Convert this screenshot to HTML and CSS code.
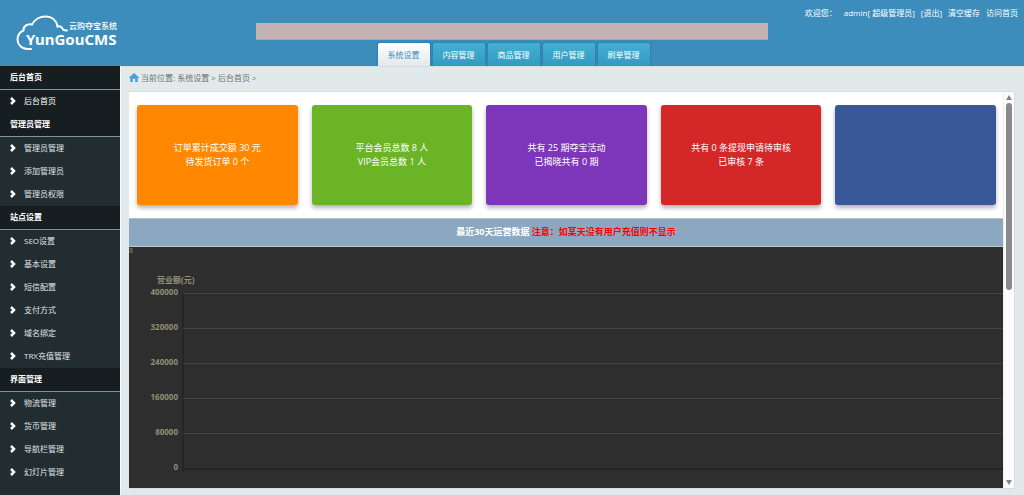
FILE: index.html
```html
<!DOCTYPE html>
<html lang="zh-CN">
<head>
<meta charset="utf-8">
<title>后台首页</title>
<link rel="stylesheet" href="styles.css">
</head>
<body>
<header class="header">
  <a class="logo" href="#">
    <svg class="logo-art" viewBox="0 0 120 66" role="img" aria-label="云购夺宝系统 YunGouCMS">
      <path class="logo-cloud" d="M31 49H27.500C21 49 17.500 44 17.500 39.500C17.500 35 20 32 23.500 30.500C23 26.500 27 23.500 32 24.500C34.500 19.500 40 16.500 45.500 16.500C52 16.500 56.500 20.500 57.500 26.500C60 25.500 62.500 27.500 63 29.500Q64 30.500 67 30.500"/>
      <text class="logo-cn" x="69" y="29">云购夺宝系统</text>
      <text class="logo-en" x="26" y="45">YunGouCMS</text>
    </svg>
  </a>
  <div class="middle">
    <div class="banner"></div>
    <nav class="tabs">
      <a class="tab tab-active" href="#">系统设置</a>
      <a class="tab" href="#">内容管理</a>
      <a class="tab" href="#">商品管理</a>
      <a class="tab" href="#">用户管理</a>
      <a class="tab" href="#">刷单管理</a>
    </nav>
  </div>
  <div class="user">
    <span class="welcome">欢迎您：</span>
    <span>admin[ 超级管理员]</span>
    <a href="#">[退出]</a>
    <a href="#">清空缓存</a>
    <a href="#">访问首页</a>
  </div>
</header>
<div class="body">
  <aside class="sidebar">
    <svg class="defs" width="0" height="0"><symbol id="arrow" viewBox="0 0 6 8"><path d="M1 1L4 4L1 7" fill="none" stroke="#fff" stroke-width="2.500"/></symbol></svg>
    <h2 class="group">后台首页</h2>
    <a class="item item-active" href="#"><svg class="arrow"><use href="#arrow"/></svg>后台首页</a>
    <h2 class="group">管理员管理</h2>
    <a class="item" href="#"><svg class="arrow"><use href="#arrow"/></svg>管理员管理</a>
    <a class="item" href="#"><svg class="arrow"><use href="#arrow"/></svg>添加管理员</a>
    <a class="item" href="#"><svg class="arrow"><use href="#arrow"/></svg>管理员权限</a>
    <h2 class="group">站点设置</h2>
    <a class="item" href="#"><svg class="arrow"><use href="#arrow"/></svg>SEO设置</a>
    <a class="item" href="#"><svg class="arrow"><use href="#arrow"/></svg>基本设置</a>
    <a class="item" href="#"><svg class="arrow"><use href="#arrow"/></svg>短信配置</a>
    <a class="item" href="#"><svg class="arrow"><use href="#arrow"/></svg>支付方式</a>
    <a class="item" href="#"><svg class="arrow"><use href="#arrow"/></svg>域名绑定</a>
    <a class="item" href="#"><svg class="arrow"><use href="#arrow"/></svg>TRX充值管理</a>
    <h2 class="group">界面管理</h2>
    <a class="item" href="#"><svg class="arrow"><use href="#arrow"/></svg>物流管理</a>
    <a class="item" href="#"><svg class="arrow"><use href="#arrow"/></svg>货币管理</a>
    <a class="item" href="#"><svg class="arrow"><use href="#arrow"/></svg>导航栏管理</a>
    <a class="item" href="#"><svg class="arrow"><use href="#arrow"/></svg>幻灯片管理</a>
  </aside>
  <main class="main">
    <div class="crumbs">
      <svg class="home" viewBox="0 0 10 9"><path d="M5 0L10 4.500L9.300 5.300L8.700 4.800V9H6.200V5.800H3.800V9H1.300V4.800L0.700 5.300L0 4.500Z" fill="#4a9fd6"/></svg>
      <span>当前位置: 系统设置 &gt; 后台首页 &gt;</span>
    </div>
    <div class="frame">
      <div class="page">
        <div class="cards">
          <section class="card orange"><p>订单累计成交额 30 元</p><p>待发货订单 0 个</p></section>
          <section class="card green"><p>平台会员总数 8 人</p><p>VIP会员总数 1 人</p></section>
          <section class="card purple"><p>共有 25 期夺宝活动</p><p>已揭晓共有 0 期</p></section>
          <section class="card red"><p>共有 0 条提现申请待审核</p><p>已审核 7 条</p></section>
          <section class="card blue"></section>
        </div>
        <h1 class="title">最近30天运营数据 <span class="note">注意：如某天没有用户充值则不显示</span></h1>
        <div class="chart">
          <div class="chart-mark">8</div>
          <div class="chart-name">营业额(元)</div>
          <div class="plot">
            <div class="band"><span class="tick">400000</span><span class="cell"></span></div>
            <div class="band"><span class="tick">320000</span><span class="cell"></span></div>
            <div class="band"><span class="tick">240000</span><span class="cell"></span></div>
            <div class="band"><span class="tick">160000</span><span class="cell"></span></div>
            <div class="band"><span class="tick">80000</span><span class="cell"></span></div>
            <div class="band band-base"><span class="tick">0</span><span class="cell"></span></div>
          </div>
        </div>
      </div>
      <div class="scroll">
        <svg class="scroll-end" viewBox="0 0 6 5"><path d="M3 0L6 5H0Z" fill="#858585"/></svg>
        <div class="track"><div class="thumb"></div></div>
        <svg class="scroll-end" viewBox="0 0 6 5"><path d="M3 5L6 0H0Z" fill="#858585"/></svg>
      </div>
    </div>
  </main>
</div>
</body>
</html>
```
FILE: styles.css
```css
* { box-sizing: border-box; }
body {
  margin: 0;
  min-height: 100vh;
  display: flex;
  flex-direction: column;
  background: #e2e9eb;
  font: 8px/12px "Open Sans", "Noto Sans CJK SC", sans-serif;
}
a { color: inherit; text-decoration: none; }
h1, h2, p { margin: 0; }

.header {
  display: grid;
  grid-template-columns: 1fr 2fr 1fr;
  height: 66px;
  background: #3c8dbc;
  color: #fff;
}
.logo-art { display: block; width: 120px; height: 66px; fill: #fff; }
.logo-cloud { fill: none; stroke: #fff; stroke-width: 2; stroke-linecap: round; }
.logo-cn { font: 500 8px "Noto Sans CJK SC", sans-serif; }
.logo-en { font: 700 15px "Noto Sans", sans-serif; }
.middle {
  display: flex;
  flex-direction: column;
  justify-content: space-between;
  padding-top: 23px;
}
.banner { height: 17px; background: #c5b2b3; border-bottom: 1px solid #a8a5ae; }
.tabs { display: flex; justify-content: center; gap: 3px; padding-left: 3px; }
.tab {
  width: 52px;
  height: 23px;
  line-height: 24px;
  text-align: center;
  border-radius: 2px 2px 0 0;
  background: linear-gradient(#45b0d2, #339ac2);
  box-shadow: 0 0 2px 1px #2f80af;
  clip-path: inset(-3px -3px 0 -3px);
}
.tab-active { background: linear-gradient(#fff, #e2e9eb); color: #3c8dbc; }
.user {
  display: flex;
  justify-content: flex-end;
  gap: 6px;
  padding: 7px 6px 0 0;
  white-space: nowrap;
}
.welcome { margin-right: 1px; }

.body { flex: 1; display: flex; }
.sidebar {
  flex: none;
  width: 121px;
  background: #222d32;
  border-right: 1px solid #f5f8f9;
  color: #e0e3e4;
}
.defs { display: block; }
.group {
  height: 24px;
  padding-left: 10px;
  font-size: 8px;
  font-weight: 700;
  line-height: 22px;
  color: #fff;
  background: #171e21;
  border-bottom: 1px solid #7d9498;
}
.item {
  display: flex;
  align-items: center;
  gap: 8px;
  height: 23px;
  padding: 0 0 1px 10px;
}
.item-active { background: #171e21; color: #fff; }
.arrow { width: 6px; height: 8px; }

.main {
  flex: 1;
  min-width: 0;
  display: flex;
  flex-direction: column;
  padding: 0 9px 6px 8px;
  border-top: 1px solid #d5dee1;
}
.crumbs {
  display: flex;
  align-items: center;
  gap: 2px;
  height: 24px;
  padding-bottom: 3px;
  color: #6d7274;
}
.home { width: 10px; height: 9px; }
.frame {
  flex: 1;
  display: flex;
  border: 1px solid #cfdfe4;
  border-left: 0;
  background: #fff;
}
.page { flex: 1; min-width: 0; display: flex; flex-direction: column; }
.cards {
  display: grid;
  grid-template-columns: repeat(5, 1fr);
  gap: 14px;
  padding: 13px 7px 13px 8px;
}
.card {
  height: 100px;
  display: flex;
  flex-direction: column;
  justify-content: center;
  text-align: center;
  font-size: 9px;
  line-height: 14px;
  color: #fff;
  border-radius: 3px;
  box-shadow: 0 3px 4px rgba(0, 0, 0, .3);
}
.orange { background: #ff8800; }
.green { background: #6bb425; }
.purple { background: #7d36b9; }
.red { background: #d42728; }
.blue { background: #395898; }
.title {
  height: 29px;
  font-size: 9px;
  font-weight: 700;
  line-height: 26px;
  text-align: center;
  color: #fff;
  background: #8ba8c0;
  border-top: 1px solid #b3bfc9;
  border-bottom: 1px solid #c4c9cc;
}
.note { color: #f00; }
.chart { flex: 1; background: #2e2e2e; color: #928f77; }
.chart-mark { line-height: 8px; font-size: 7px; }
.chart-name { padding: 19px 0 0 28px; font-weight: 700; }
.plot { padding-top: 7px; }
.band { display: flex; height: 35px; }
.band-base { height: 3px; }
.tick {
  width: 49px;
  margin: -7px 4px 0 0;
  text-align: right;
  font-weight: 700;
}
.cell { flex: 1; border-left: 2px solid #252525; border-top: 1px solid #444; }
.band-base .cell { border-top: 2px solid #252525; }
.scroll {
  flex: none;
  width: 11px;
  display: flex;
  flex-direction: column;
  align-items: center;
  gap: 3px;
  padding: 3px 0;
  background: #fcfcfc;
  border-left: 1px solid #ededed;
}
.scroll-end { width: 6px; height: 5px; }
.track { flex: 1; width: 6px; }
.thumb { height: 50%; border-radius: 3px; background: #8a8a8a; }
```
